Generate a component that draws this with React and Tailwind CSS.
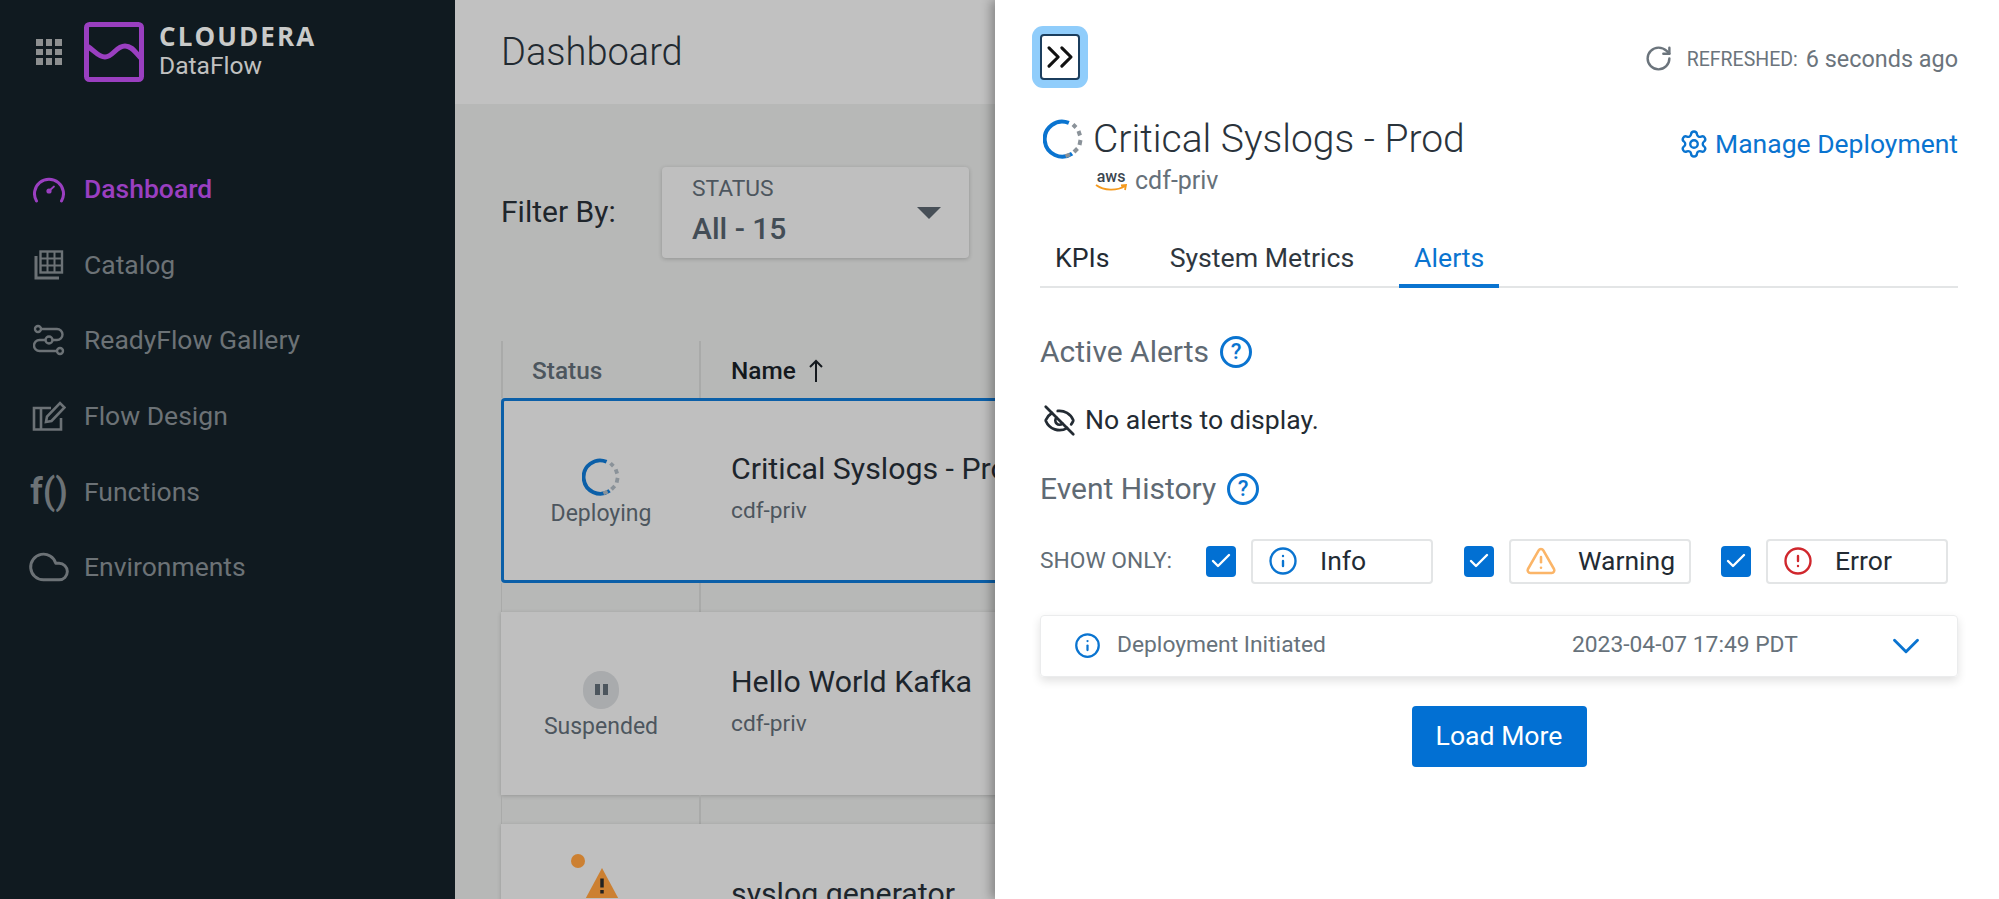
import { Check, ChevronDown, ChevronsRight, CircleAlert, Cloud, EyeOff, Info, RotateCw, Settings, TriangleAlert } from 'lucide-react';

function Spinner({ className }) {
  return (
    <svg viewBox="0 0 40 40" className={className} fill="none" strokeWidth="4">
      <path d="M27.5 4.6 A17.5 17.5 0 1 0 27.5 35.4" stroke="currentColor" transform="rotate(-6 20 20)" />
      <path d="M30 5.5 L33 8.5 M35.5 12 L37 16.5 M37.5 21 L36.5 26 M34.5 29.5 L31 33 M27 35.5 L22.5 37.2" stroke="#8a9299" />
    </svg>
  );
}

function GaugeIcon() {
  return (
    <svg viewBox="0 0 32 28" className="h-[28px] w-[32px]" fill="none" stroke="currentColor" strokeWidth="3" strokeLinecap="round">
      <path d="M3.5 26 A14.5 14.5 0 1 1 28.5 26" />
      <circle cx="16" cy="16" r="2.6" fill="currentColor" stroke="none" />
      <path d="M16 16 L21 11.5" strokeWidth="1.8" />
    </svg>
  );
}

function CatalogIcon() {
  return (
    <svg viewBox="0 0 30 30" className="h-[30px] w-[30px]" fill="none" stroke="currentColor" strokeWidth="2.4">
      <rect x="6.5" y="1.5" width="21.5" height="21" />
      <path d="M13.5 1.5 V22.5 M20.5 1.5 V22.5 M6.5 8.5 H28 M6.5 15.5 H28" strokeWidth="2" />
      <path d="M2 6 V28 H25" strokeWidth="3" />
    </svg>
  );
}

function ReadyFlowIcon() {
  return (
    <svg viewBox="0 0 32 32" className="h-[32px] w-[32px]" fill="none" stroke="currentColor" strokeWidth="2.4">
      <circle cx="5" cy="5" r="3" />
      <circle cx="27" cy="27" r="3" />
      <circle cx="16" cy="16" r="3.5" />
      <path d="M8 5 H24 A5.5 5.5 0 0 1 24 16 H19.5 M12.5 16 H6.5 A5.5 5.5 0 0 0 6.5 27 H24" />
    </svg>
  );
}

function DesignIcon() {
  return (
    <svg viewBox="0 0 34 30" className="h-[30px] w-[34px]" fill="none" stroke="currentColor" strokeWidth="2.6">
      <path d="M29 17 V28.5 H2 V7 H19" />
      <path d="M9 7 V28.5" />
      <path d="M14 21 L15 15.5 L28 2 L32.5 6.5 L19.5 20 Z" />
    </svg>
  );
}

function GridIcon() {
  return (
    <div className="grid h-[26px] w-[26px] grid-cols-3 gap-[3px]">
      {[0, 1, 2, 3, 4, 5, 6, 7, 8].map((n) => (
        <div key={n} className="bg-[#8d8f90]" />
      ))}
    </div>
  );
}

function Logo() {
  return (
    <svg viewBox="0 0 60 60" className="h-[60px] w-[60px]" fill="none" stroke="#9a3fc0" strokeWidth="5">
      <rect x="2.5" y="2.5" width="55" height="55" rx="3" />
      <path d="M3 24 C10 28 14 35 21 35 C29 35 32 24 41 24 C49 24 52 32 58 37" />
    </svg>
  );
}

function HelpIcon() {
  return (
    <span className="ml-[11px] flex h-[32px] w-[32px] items-center justify-center rounded-full border-[3px] border-[#0a74d0] text-[22px] leading-none font-medium text-[#0a74d0]">?</span>
  );
}

function Filter({ icon, label, textClass }) {
  return (
    <div className="flex items-center">
      <div className="flex h-[31px] w-[30px] items-center justify-center rounded-[4px] bg-[#0270d3]">
        <Check size={24} strokeWidth={2.4} className="text-white" />
      </div>
      <div className="ml-[15px] flex h-[45px] w-[182px] items-center rounded-[4px] border-2 border-[#e3e5e6]">
        <div className={`flex w-[67px] justify-center pr-[8px] ${textClass}`}>{icon}</div>
        <span className="text-[26.5px] text-[#232b33]">{label}</span>
      </div>
    </div>
  );
}

function Row({ icon, status, name, height, active }) {
  return (
    <div
      className={`flex w-[700px] shrink-0 items-center bg-[#bfbfbf] ${height} ${
        active ? 'rounded-[4px] shadow-[inset_0_0_0_3px_#0b5fa8]' : 'shadow-[0_1px_4px_rgba(0,0,0,0.18)]'
      }`}
    >
      <div className="flex w-[200px] shrink-0 flex-col items-center pt-[8px] text-[23px] text-[#4d565e]">
        {icon}
        <span className="mt-[1px] min-h-[34px]">{status}</span>
      </div>
      <div className="pb-[7px] pl-[30px]">
        <div className="text-[30.3px] whitespace-nowrap text-[#1d252c]">{name}</div>
        <div className="mt-[3px] text-[22.7px] text-[#4d565e]">cdf-priv</div>
      </div>
    </div>
  );
}

function Spacer() {
  return (
    <div className="flex h-[29px] shrink-0 border-l border-[#a9aaa9]">
      <div className="w-[199px] border-r-2 border-[#a9aaa9]" />
    </div>
  );
}

const navItems = [
  { label: 'Catalog', icon: <CatalogIcon /> },
  { label: 'ReadyFlow Gallery', icon: <ReadyFlowIcon /> },
  { label: 'Flow Design', icon: <DesignIcon /> },
  { label: 'Functions', icon: <span className="text-[36px] leading-none font-semibold whitespace-nowrap">f()</span> },
  { label: 'Environments', icon: <Cloud size={44} strokeWidth={1.6} className="shrink-0" /> },
];

export default function App() {
  return (
    <div className="flex h-[899px] w-[1999px] overflow-hidden bg-white font-['Roboto',sans-serif]">
      {/* sidebar */}
      <aside className="flex h-full w-[455px] shrink-0 flex-col bg-[#101a20]">
        <div className="flex items-center pt-[22px] pl-[36px]">
          <GridIcon />
          <div className="ml-[22px]"><Logo /></div>
          <div className="ml-[15px]">
            <div className="-mt-[1px] font-['Open_Sans',sans-serif] text-[26px] leading-[26px] font-bold tracking-[2.1px] text-[#c9cac9]">CLOUDERA</div>
            <div className="mt-[2px] text-[24.6px] leading-[30px] text-[#c0c1c0]">DataFlow</div>
          </div>
        </div>
        <nav className="mt-[69px] flex flex-col">
          <div className="flex h-[75.7px] items-center text-[#9a3fc0]">
            <div className="flex w-[84px] justify-center pl-[14px]"><GaugeIcon /></div>
            <span className="text-[26.5px] font-medium">Dashboard</span>
          </div>
          {navItems.map((item) => (
            <div key={item.label} className="flex h-[75.7px] items-center text-[#6c7276]">
              <div className="flex w-[84px] justify-center pl-[14px]">{item.icon}</div>
              <span className="text-[26.5px]">{item.label}</span>
            </div>
          ))}
        </nav>
      </aside>

      {/* dashboard behind the drawer */}
      <main className="flex h-full w-[540px] shrink-0 flex-col overflow-hidden bg-[#b7b8b7]">
        <div className="flex h-[104px] shrink-0 items-center bg-[#c1c1c1] pl-[46px] text-[38px] font-light text-[#222a31]">Dashboard</div>
        <div className="mt-[63px] flex items-center pl-[46px]">
          <span className="w-[161px] pb-[2px] text-[30px] text-[#1f262c]">Filter By:</span>
          <div className="flex h-[91px] w-[307px] items-center justify-between rounded-[4px] bg-[#bfbfbf] pr-[28px] pl-[30px] shadow-[0_1px_4px_rgba(0,0,0,0.2)]">
            <div>
              <div className="-mt-[3px] text-[22.8px] leading-[24px] text-[#4d565e]">STATUS</div>
              <div className="mt-[11px] text-[30px] leading-[34px] font-medium text-[#434d56]">All - 15</div>
            </div>
            <div className="h-0 w-0 border-x-[12px] border-t-[12px] border-x-transparent border-t-[#474f57]" />
          </div>
        </div>
        <div className="mt-[83px] flex h-[57px] shrink-0 items-center pl-[46px] text-[24.4px] font-medium">
          <div className="flex h-full w-[200px] items-center border-x-2 border-[#a9aaa9] pt-[4px] pl-[29px] text-[#4d565e]">Status</div>
          <div className="flex items-center pt-[4px] pl-[30px] text-[#14191e]">
            Name
            <svg viewBox="0 0 16 24" className="ml-[12px] h-[24px] w-[16px]" fill="none" stroke="currentColor" strokeWidth="2">
              <path d="M8 23 V2 M2 8 L8 2 L14 8" />
            </svg>
          </div>
        </div>
        <div className="flex flex-col pl-[46px]">
          <Row active height="h-[185px]" status="Deploying" name="Critical Syslogs - Prod" icon={<Spinner className="h-[38px] w-[38px] text-[#0b5fa8]" />} />
          <Spacer />
          <Row
            height="h-[183px]"
            status="Suspended"
            name="Hello World Kafka"
            icon={
              <div className="flex h-[38px] w-[36px] items-center justify-center gap-[3px] rounded-full bg-[#a9abad]">
                <div className="h-[11px] w-[5px] bg-[#4d565e]" />
                <div className="h-[11px] w-[5px] bg-[#4d565e]" />
              </div>
            }
          />
          <Spacer />
          <Row
            height="h-[183px]"
            name="syslog generator"
            icon={
              <div className="relative h-[38px] w-[36px]">
                <div className="absolute -top-[29px] -left-[12px] h-[14px] w-[14px] rounded-full bg-[#cc8032]" />
                <svg viewBox="0 0 28 26" className="absolute -top-[15px] left-[2px] h-[30px] w-[34px]">
                  <path d="M14 0 L28 26 H0 Z" fill="#cc8032" />
                  <path d="M14 9 V17 M14 19 V22" stroke="#222" strokeWidth="3" />
                </svg>
              </div>
            }
          />
        </div>
      </main>

      {/* deployment drawer */}
      <section className="relative z-10 flex h-full flex-1 flex-col bg-white pr-[41px] pl-[45px] shadow-[-4px_0_10px_rgba(0,0,0,0.3)]">
        <div className="flex items-start justify-between pt-[34px]">
          <button className="flex h-[46px] w-[40px] items-center justify-center rounded-[4px] border-2 border-[#1b3e5e] bg-white shadow-[0_0_0_8px_#90cdfb]">
            <ChevronsRight size={44} strokeWidth={1.7} className="shrink-0 text-[#111]" />
          </button>
          <div className="flex items-center pt-[8px] text-[#6b747c]">
            <RotateCw size={29} strokeWidth={2} className="-mt-[3px]" />
            <span className="ml-[14px] text-[19.5px]">REFRESHED:</span>
            <span className="ml-[8px] text-[23.4px]">6 seconds ago</span>
          </div>
        </div>

        <div className="mt-[37px] flex items-start justify-between">
          <div>
            <div className="flex items-center pl-[3px]">
              <Spinner className="h-[40px] w-[40px] text-[#0a74d0]" />
              <h1 className="ml-[10px] text-[39px] leading-[44px] font-light text-[#2a333b]">Critical Syslogs - Prod</h1>
            </div>
            <div className="mt-[4px] flex items-center pl-[55px]">
              <div className="flex w-[32px] flex-col items-center">
                <span className="text-[16px] leading-[14px] font-medium text-[#3b4650]">aws</span>
                <svg viewBox="0 0 32 8" className="h-[8px] w-[32px]" fill="none" stroke="#f49a1e" strokeWidth="1.8">
                  <path d="M1 1 C9 7 22 7 30 2 M26 1.5 L31 1 L30 6" />
                </svg>
              </div>
              <span className="ml-[8px] text-[25px] leading-[32px] text-[#66717a]">cdf-priv</span>
            </div>
          </div>
          <div className="flex items-center pt-[7px] text-[#0a74d0]">
            <Settings size={30} strokeWidth={1.9} />
            <span className="ml-[6px] text-[26.5px]">Manage Deployment</span>
          </div>
        </div>

        <div className="mt-[36px] flex h-[55px] shrink-0 items-stretch border-b-2 border-[#e3e5e6] pb-[2px] text-[26.7px]">
          <div className="flex items-center pl-[15px] text-[#232b33]">KPIs</div>
          <div className="ml-[60px] flex items-center text-[#2f373e]">System Metrics</div>
          <div className="-mb-[4px] ml-[45px] flex w-[100px] items-center justify-center border-b-[4px] border-[#0a74d0] text-[#0a74d0]">Alerts</div>
        </div>

        <div className="mt-[46px] flex items-center text-[30px] leading-[36px] text-[#5f6a74]">
          Active Alerts
          <HelpIcon />
        </div>
        <div className="mt-[33.5px] flex items-center pl-[3px] text-[26.6px] leading-[32px] text-[#232b33]">
          <EyeOff size={33} strokeWidth={2} />
          <span className="ml-[9px]">No alerts to display.</span>
        </div>
        <div className="mt-[34px] flex items-center text-[30px] leading-[36px] text-[#5f6a74]">
          Event History
          <HelpIcon />
        </div>

        <div className="mt-[32px] flex items-center">
          <span className="w-[166px] text-[22.8px] text-[#626d76]">SHOW ONLY:</span>
          <Filter label="Info" textClass="text-[#0a74d0]" icon={<Info size={30} strokeWidth={1.9} />} />
          <div className="ml-[31px]">
            <Filter label="Warning" textClass="text-[#fbb568]" icon={<TriangleAlert size={32} strokeWidth={1.9} />} />
          </div>
          <div className="ml-[30px]">
            <Filter label="Error" textClass="text-[#d0272d]" icon={<CircleAlert size={30} strokeWidth={1.9} />} />
          </div>
        </div>

        <div className="mt-[31px] flex h-[62px] shrink-0 items-center rounded-[4px] border border-[#ebeced] pr-[28px] pl-[33px] shadow-[0_4px_10px_rgba(0,0,0,0.12)]">
          <Info size={27} strokeWidth={2} className="text-[#0a74d0]" />
          <span className="ml-[16px] w-[455px] text-[22.8px] text-[#67727b]">Deployment Initiated</span>
          <span className="text-[22.8px] text-[#67727b]">2023-04-07 17:49 PDT</span>
          <ChevronDown size={46} strokeWidth={1.5} className="ml-auto text-[#0a74d0]" />
        </div>

        <div className="mt-[29px] flex justify-center">
          <button className="flex h-[61px] w-[175px] items-center justify-center rounded-[4px] bg-[#0270d3] text-[26.6px] text-white">Load More</button>
        </div>
      </section>
    </div>
  );
}
